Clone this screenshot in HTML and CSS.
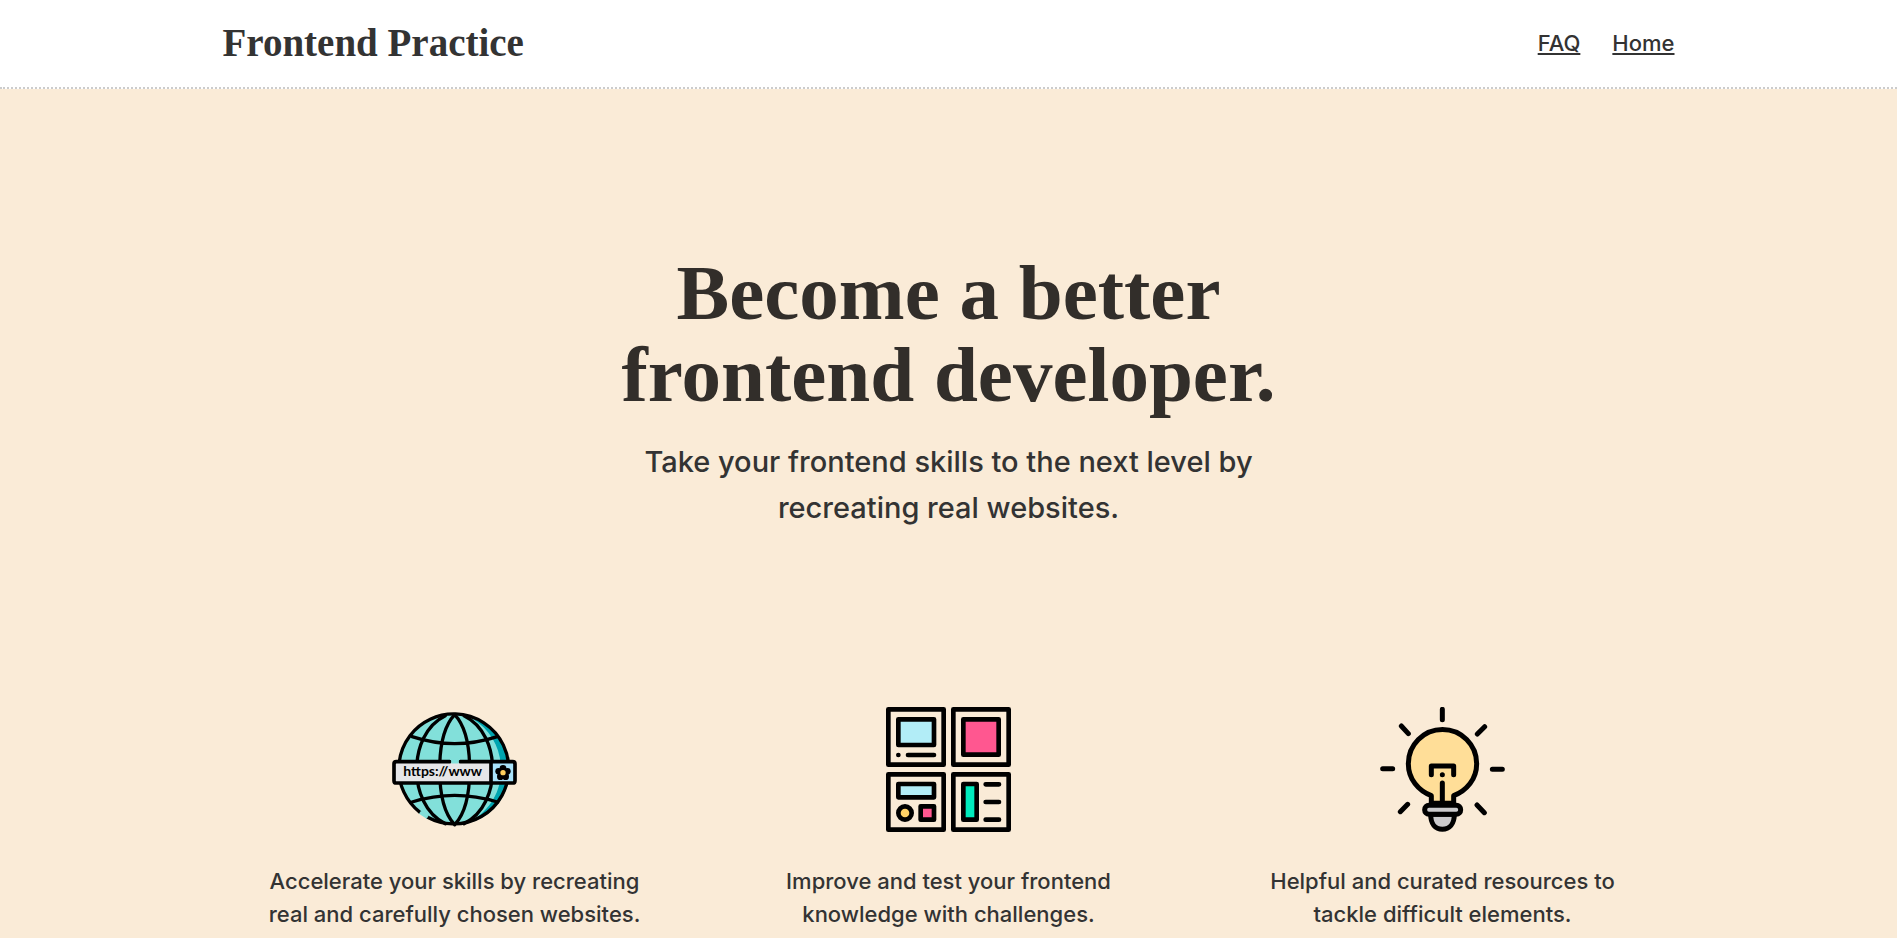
FILE: index.html
```html
<!DOCTYPE html>
<html lang="en">
<head>
<meta charset="utf-8">
<meta name="viewport" content="width=device-width, initial-scale=1">
<title>Frontend Practice</title>
<link rel="stylesheet" href="styles.css">
</head>
<body>
<header class="site-header">
  <div class="container header-row">
    <div class="brand">Frontend Practice</div>
    <nav class="nav">
      <a href="#faq">FAQ</a>
      <a href="#home">Home</a>
    </nav>
  </div>
</header>
<main>
  <section class="hero">
    <h1>Become a better<br>frontend developer.</h1>
    <p>Take your frontend skills to the next level by<br>recreating real websites.</p>
  </section>
  <section class="container features">
    <article class="feature">
      <svg class="icon" viewBox="38 21 375 375" aria-hidden="true">
        <circle cx="226" cy="209" r="165" fill="#82e0da"/>
        <path d="M280 56C335 90 365 145 365 209S335 328 270 368C340 350 391 285 391 209S340 72 280 56Z" fill="#00a5b0"/>
        <g fill="none" stroke="#000" stroke-width="10" stroke-linecap="round">
          <path d="M145 352A165 165 0 1 0 122 337"/>
          <path d="M226 44C192 80 181 140 181 209S192 338 226 374M226 44C260 80 271 140 271 209S260 338 226 374"/>
          <path d="M198 47C138 76 112 145 112 209S138 342 198 371M254 47C314 76 340 145 340 209S314 342 254 371"/>
          <path d="M98 110Q226 152 354 110M98 306Q226 266 354 306"/>
        </g>
        <path d="M122 337L145 352" stroke="#82e0da" stroke-width="11"/>
        <rect x="44" y="185" width="363" height="64" rx="7" fill="#e6e6e8"/>
        <path d="M335 185H407V249H335Z" fill="#a9e3fb"/>
        <path d="M211 185H51Q44 185 44 192V242Q44 249 51 249H400Q407 249 407 242V192Q407 185 400 185H243M335 185V249" fill="none" stroke="#000" stroke-width="11" stroke-linecap="round"/>
        <path d="M216 185H238" stroke="#82e0da" stroke-width="11"/>
        <g>
          <circle cx="371" cy="205" r="10"/><circle cx="384" cy="214" r="10"/><circle cx="379" cy="230" r="10"/><circle cx="363" cy="230" r="10"/><circle cx="358" cy="214" r="10"/>
          <circle cx="371" cy="218" r="8" fill="#ffcf5c"/>
        </g>
        <text class="url" x="190" y="229" text-anchor="middle">https://www</text>
      </svg>
      <p>Accelerate your skills by recreating<br>real and carefully chosen websites.</p>
    </article>
    <article class="feature">
      <svg class="icon" viewBox="36 36 375 375" aria-hidden="true">
        <g fill="none" stroke="#000" stroke-width="14" stroke-linejoin="round">
          <rect x="43" y="43" width="166" height="166"/>
          <rect x="238" y="43" width="166" height="166"/>
          <rect x="43" y="238" width="166" height="166"/>
          <rect x="238" y="238" width="166" height="166"/>
          <rect x="73" y="73" width="107" height="77" fill="#b2edf7"/>
          <rect x="268" y="73" width="106" height="106" fill="#ff5790"/>
          <rect x="73" y="267" width="107" height="40" fill="#b2edf7"/>
          <rect x="268" y="267" width="40" height="107" fill="#00ebbd"/>
          <rect x="140" y="334" width="40" height="40" fill="#ff5790"/>
          <circle cx="93" cy="354" r="20" fill="#ffd166"/>
          <path d="M73 180H73.1M102 180H180M335 268H375M335 321H375M335 374H375" stroke-linecap="round"/>
        </g>
      </svg>
      <p>Improve and test your frontend<br>knowledge with challenges.</p>
    </article>
    <article class="feature">
      <svg class="icon" viewBox="33 36 375 375" aria-hidden="true">
        <g fill="none" stroke="#000" stroke-width="15" stroke-linecap="round" stroke-linejoin="round">
          <path d="M187 325V302C148 287 118 252 118 206A102 102 0 0 1 323 206C323 252 293 287 254 302V325Z" fill="#ffde98"/>
          <path d="M187 239V213H254V239M220 239H220.1M220 264V325"/>
          <path d="M185 358C185 387 199 403 220 403S256 387 256 358Z" fill="#cbcacc"/>
          <rect x="167" y="331" width="108" height="27" rx="13" fill="#cbcacc"/>
          <path d="M220 43V74M97 93L118 116M347 95L325 117M41 221H71M370 223H400M116 328L94 350M324 330L346 353"/>
        </g>
      </svg>
      <p>Helpful and curated resources to<br>tackle difficult elements.</p>
    </article>
  </section>
</main>
</body>
</html>
```
FILE: styles.css
```css
* {
  box-sizing: border-box;
}

body {
  margin: 0;
  min-height: 100vh;
  background: #faebd7;
  color: #333;
  font-family: Inter, "Liberation Sans", sans-serif;
  font-weight: 500;
}

.container {
  width: 100%;
  max-width: 1484px;
  margin: 0 auto;
  padding: 0 16px;
}

.site-header {
  background: #fff;
  border-bottom: 2px dotted #ccc;
}

.header-row {
  display: flex;
  align-items: center;
  justify-content: space-between;
  padding-top: 19px;
  padding-bottom: 20px;
}

.brand {
  font-family: "Liberation Serif", serif;
  font-size: 39px;
  font-weight: 700;
  line-height: 48px;
}

.nav {
  display: flex;
  gap: 32px;
  font-size: 22px;
  line-height: 33px;
}

.nav a {
  color: inherit;
  text-underline-offset: 2px;
  text-decoration-thickness: 2px;
}

.hero {
  padding: 163px 16px 176px;
  text-align: center;
}

.hero h1 {
  margin: 0 0 23px;
  color: #322e2a;
  font-family: "Liberation Serif", serif;
  font-size: 79px;
  font-weight: 700;
  line-height: 82px;
}

.hero p {
  margin: 0;
  font-size: 29px;
  line-height: 46px;
}

.features {
  display: grid;
  grid-template-columns: repeat(3, 1fr);
  gap: 30px;
}

.feature {
  display: flex;
  flex-direction: column;
  align-items: center;
  gap: 33px;
  text-align: center;
}

.feature p {
  margin: 0;
  font-size: 22px;
  line-height: 33px;
}

.icon {
  width: 125px;
  height: 125px;
}

.url {
  font-family: Lato, sans-serif;
  font-size: 42px;
  font-weight: 700;
}
```
